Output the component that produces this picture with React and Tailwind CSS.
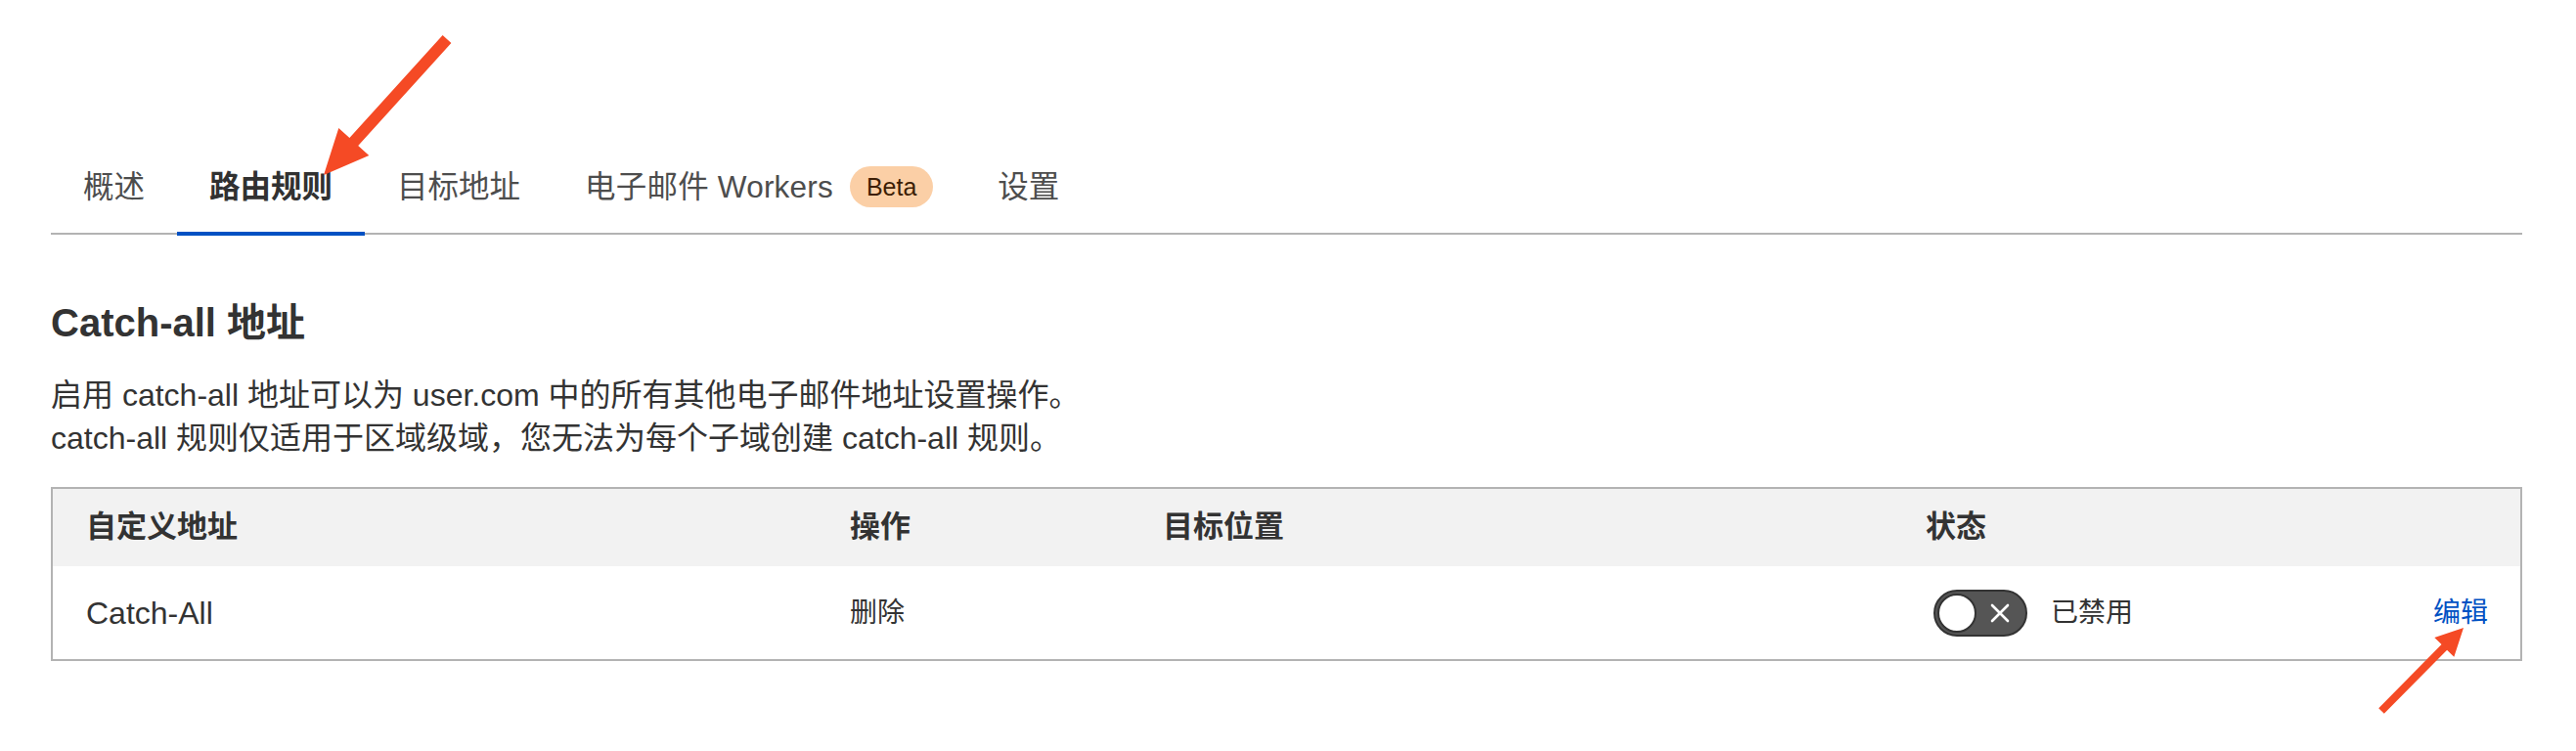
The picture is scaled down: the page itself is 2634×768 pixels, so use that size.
const tabs = [
  { label: '概述' },
  { label: '路由规则', active: true },
  { label: '目标地址' },
  { label: '电子邮件 Workers', badge: 'Beta' },
  { label: '设置' },
];

function Tabs() {
  return (
    <div className="flex border-b-2 border-[#b3b3b3]">
      {tabs.map((tab) => (
        <div
          key={tab.label}
          className={`flex items-center gap-[17px] px-[33px] pb-[23px] -mb-[3px] border-b-4 leading-[46px] text-[31.5px] ${
            tab.active ? 'border-[#0051c3] font-bold text-[#313131]' : 'border-transparent text-[#4d4d4d]'
          }`}
        >
          <span className={tab.badge ? 'tracking-[0.2px]' : ''}>{tab.label}</span>
          {tab.badge && (
            <span className="flex h-[42px] items-center rounded-full bg-[#fbcfa6] px-[17px] text-[25px] leading-none text-[#3d1e05]">
              {tab.badge}
            </span>
          )}
        </div>
      ))}
    </div>
  );
}

function Toggle() {
  return (
    <div className="relative ml-[8px] h-[48px] w-[96px] rounded-full border-2 border-[#333] bg-[#555]">
      <div className="absolute left-[2px] top-[2px] h-[40px] w-[40px] rounded-full border-2 border-[#333] bg-white" />
      <svg className="absolute left-[56px] top-[12px]" width="20" height="20" viewBox="0 0 20 20">
        <path d="M2 2 L18 18 M18 2 L2 18" stroke="white" strokeWidth="2.6" strokeLinecap="round" />
      </svg>
    </div>
  );
}

function CatchAllTable() {
  return (
    <div className="border-2 border-[#b3b3b3]">
      <div className="grid h-[79px] grid-cols-[815px_320px_780px_1fr] items-center bg-[#f2f2f2] text-[31px] font-bold text-[#333]">
        <div className="pl-[34px]">自定义地址</div>
        <div>操作</div>
        <div>目标位置</div>
        <div>状态</div>
      </div>
      <div className="grid h-[95px] grid-cols-[815px_320px_780px_1fr_auto] items-center text-[#333]">
        <div className="pl-[34px] text-[32px]">Catch-All</div>
        <div className="text-[28px]">删除</div>
        <div />
        <div className="flex items-center gap-[24px]">
          <Toggle />
          <span className="text-[28px]">已禁用</span>
        </div>
        <a className="pr-[33px] text-[28px] text-[#0051c3]" href="#">
          编辑
        </a>
      </div>
    </div>
  );
}

function Arrows() {
  return (
    <svg className="pointer-events-none absolute inset-0" width="2634" height="768" viewBox="0 0 2634 768">
      <polygon
        fill="#f54a25"
        points="461.4,44 366.2,149 377.3,159.1 331,179 346.3,130.9 357.4,141 452.6,36"
      />
      <polygon
        fill="#f54a25"
        points="2437.8,729.8 2502.1,664.7 2509.3,671.7 2519,642 2489.3,652.1 2496.5,659.1 2432.2,724.2"
      />
    </svg>
  );
}

export default function App() {
  return (
    <div
      className="relative h-[768px] w-[2634px] overflow-hidden bg-white pl-[52px] pr-[55px] pt-[168px] text-[#333]"
      style={{ fontFamily: '"Liberation Sans", "Noto Sans CJK SC", sans-serif' }}
    >
      <Tabs />

      <h2 className="mt-[66px] text-[40px] font-bold leading-[48px] text-[#333]">Catch-all 地址</h2>
      <div className="mt-[28px] text-[32px] leading-[44px] text-[#333]">
        <p>启用 catch-all 地址可以为 user.com 中的所有其他电子邮件地址设置操作。</p>
        <p>catch-all 规则仅适用于区域级域，您无法为每个子域创建 catch-all 规则。</p>
      </div>

      <div className="mt-[28px]">
        <CatchAllTable />
      </div>

      <Arrows />
    </div>
  );
}
